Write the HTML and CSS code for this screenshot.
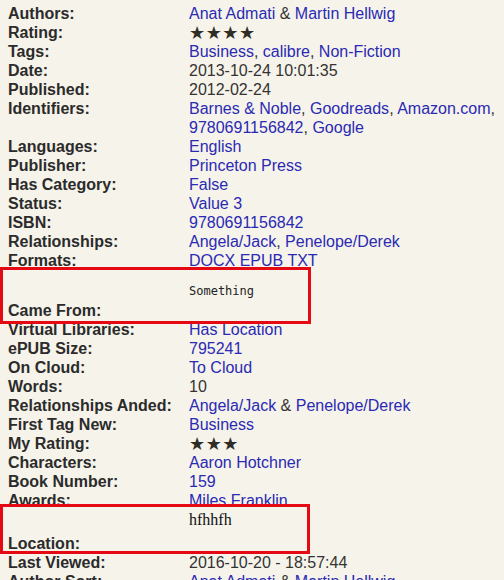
FILE: index.html
```html
<!DOCTYPE html>
<html>
<head>
<meta charset="utf-8">
<link rel="stylesheet" href="styles.css">
</head>
<body>
<div class="page">
<table class="meta">
<tr><td class="k">Authors:</td><td class="v"><a>Anat Admati</a> &amp; <a>Martin Hellwig</a></td></tr>
<tr><td class="k">Rating:</td><td class="v stars">★★★★</td></tr>
<tr><td class="k">Tags:</td><td class="v"><a>Business</a>, <a>calibre</a>, <a>Non-Fiction</a></td></tr>
<tr><td class="k">Date:</td><td class="v">2013-10-24 10:01:35</td></tr>
<tr><td class="k">Published:</td><td class="v">2012-02-24</td></tr>
<tr><td class="k">Identifiers:</td><td class="v"><a>Barnes &amp; Noble</a>, <a>Goodreads</a>, <a>Amazon.com</a>,<br><a>9780691156842</a>, <a>Google</a></td></tr>
<tr><td class="k">Languages:</td><td class="v"><a>English</a></td></tr>
<tr><td class="k">Publisher:</td><td class="v"><a>Princeton Press</a></td></tr>
<tr><td class="k">Has Category:</td><td class="v"><a>False</a></td></tr>
<tr><td class="k">Status:</td><td class="v"><a>Value 3</a></td></tr>
<tr><td class="k">ISBN:</td><td class="v"><a>9780691156842</a></td></tr>
<tr><td class="k">Relationships:</td><td class="v"><a>Angela/Jack</a>, <a>Penelope/Derek</a></td></tr>
<tr><td class="k">Formats:</td><td class="v"><a>DOCX</a> <a>EPUB</a> <a>TXT</a></td></tr>
<tr class="came"><td class="k bottom">Came From:</td><td class="v"><div class="mono">Something</div></td></tr>
<tr><td class="k">Virtual Libraries:</td><td class="v"><a>Has Location</a></td></tr>
<tr><td class="k">ePUB Size:</td><td class="v"><a>795241</a></td></tr>
<tr><td class="k">On Cloud:</td><td class="v"><a>To Cloud</a></td></tr>
<tr><td class="k">Words:</td><td class="v">10</td></tr>
<tr><td class="k">Relationships Anded:</td><td class="v"><a>Angela/Jack</a> &amp; <a>Penelope/Derek</a></td></tr>
<tr><td class="k">First Tag New:</td><td class="v"><a>Business</a></td></tr>
<tr><td class="k">My Rating:</td><td class="v stars">★★★</td></tr>
<tr><td class="k">Characters:</td><td class="v"><a>Aaron Hotchner</a></td></tr>
<tr><td class="k">Book Number:</td><td class="v"><a>159</a></td></tr>
<tr><td class="k">Awards:</td><td class="v"><a>Miles Franklin</a></td></tr>
<tr class="loc"><td class="k bottom">Location:</td><td class="v"><div class="serif">hfhhfh</div></td></tr>
<tr><td class="k">Last Viewed:</td><td class="v">2016-10-20 - 18:57:44</td></tr>
<tr><td class="k">Author Sort:</td><td class="v"><a>Anat Admati</a> &amp; <a>Martin Hellwig</a></td></tr>
</table>
</div>
<div class="mark mark-one"></div>
<div class="mark mark-two"></div>
</body>
</html>
```

FILE: styles.css
```css
html, body {
  margin: 0;
  padding: 0;
  background: #f6f3ea;
  overflow: hidden;
}
.page {
  padding: 4px 8px;
  font-family: "Liberation Sans", Arial, sans-serif;
  font-size: 16px;
  line-height: 19px;
  color: #333333;
}
.meta {
  border-collapse: collapse;
  border-spacing: 0;
}
.meta td {
  padding: 0;
  vertical-align: top;
  white-space: nowrap;
}
.k {
  width: 181px;
  font-weight: bold;
  color: #2b2b2b;
}
.k.bottom {
  vertical-align: bottom !important;
}
.v a {
  color: #2a2ab4;
  text-decoration: none;
}
.stars {
  font-family: "DejaVu Sans", sans-serif;
  font-size: 18px;
  line-height: 19px;
  letter-spacing: 0.5px;
  color: #2e2d26;
}
.came {
  height: 50px;
}
.came .v {
  height: 50px;
}
.mono {
  padding-top: 12px;
  font-family: "DejaVu Sans Mono", monospace;
  font-size: 12px;
  color: #222;
}
.loc .v {
  height: 43px;
}
.serif {
  font-family: "Liberation Serif", serif;
  font-size: 16px;
  color: #111;
}
.mark {
  position: absolute;
  left: 0;
  border: 3px solid #e50914;
  box-sizing: border-box;
}
.mark-one {
  top: 267px;
  width: 311px;
  height: 57px;
}
.mark-two {
  top: 504px;
  width: 310px;
  height: 50px;
}
```
